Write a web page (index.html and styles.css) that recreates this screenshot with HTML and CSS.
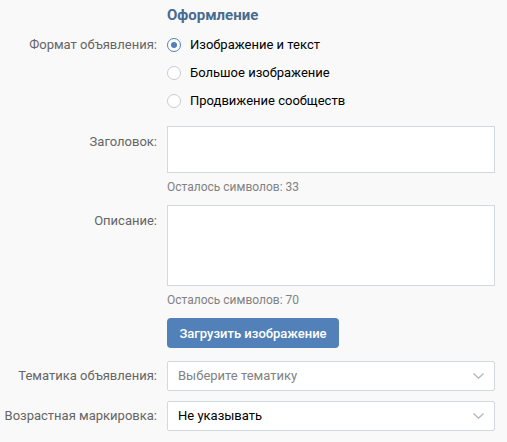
FILE: index.html
```html
<!DOCTYPE html>
<html lang="ru">
<head>
<meta charset="utf-8">
<link rel="stylesheet" href="styles.css">
</head>
<body>
<div class="form">
  <div class="row heading-row">
    <div class="label"></div>
    <div class="heading">Оформление</div>
  </div>

  <div class="row radios-row">
    <div class="label label-radio">Формат объявления:</div>
    <div class="radios">
      <div class="radio checked"><span class="dot"></span><span class="rtext">Изображение и текст</span></div>
      <div class="radio"><span class="dot"></span><span class="rtext">Большое изображение</span></div>
      <div class="radio"><span class="dot"></span><span class="rtext">Продвижение сообществ</span></div>
    </div>
  </div>

  <div class="row title-row">
    <div class="label label-top">Заголовок:</div>
    <div class="control">
      <div class="input input-title"></div>
      <div class="hint">Осталось символов: 33</div>
    </div>
  </div>

  <div class="row desc-row">
    <div class="label label-top">Описание:</div>
    <div class="control">
      <div class="input input-desc"></div>
      <div class="hint">Осталось символов: 70</div>
    </div>
  </div>

  <div class="row button-row">
    <div class="label"></div>
    <div class="control">
      <button class="btn">Загрузить изображение</button>
    </div>
  </div>

  <div class="row select-row select-first">
    <div class="label label-center">Тематика объявления:</div>
    <div class="select placeholder">
      <span>Выберите тематику</span>
      <svg class="chev" width="11" height="6" viewBox="0 0 11 6"><path d="M0.5 0.5 L5.5 5.2 L10.5 0.5" fill="none" stroke="#aab2bd" stroke-width="1.2"/></svg>
    </div>
  </div>

  <div class="row select-row">
    <div class="label label-center">Возрастная маркировка:</div>
    <div class="select">
      <span>Не указывать</span>
      <svg class="chev" width="11" height="6" viewBox="0 0 11 6"><path d="M0.5 0.5 L5.5 5.2 L10.5 0.5" fill="none" stroke="#aab2bd" stroke-width="1.2"/></svg>
    </div>
  </div>
</div>
</body>
</html>
```

FILE: styles.css
```css
html, body {
  margin: 0;
  padding: 0;
  background: #f9f9f9;
}
body {
  font-family: Roboto, "Liberation Sans", Arial, sans-serif;
  font-size: 13px;
  color: #000;
}
.form {
  width: 495px;
}
.row {
  display: grid;
  grid-template-columns: 157px 328px;
  column-gap: 10px;
}
.label {
  text-align: right;
  color: #656565;
  line-height: 16px;
  white-space: nowrap;
}
.label-radio {
  padding-top: 6px;
}
.label-top {
  padding-top: 8px;
}
.label-center {
  align-self: center;
}
.heading-row {
  padding-top: 6px;
}
.heading {
  font-size: 15px;
  font-weight: 700;
  line-height: 18px;
  color: #4a6a8f;
}
.radios-row {
  margin-top: 7px;
}
.radio {
  display: flex;
  align-items: center;
  height: 28px;
}
.dot {
  box-sizing: border-box;
  width: 14px;
  height: 14px;
  border: 1px solid #c5ccd4;
  border-radius: 50%;
  background: #fff;
  margin-right: 9px;
  position: relative;
}
.radio.checked .dot {
  border-color: #5181b8;
}
.radio.checked .dot::after {
  content: "";
  position: absolute;
  left: 3px;
  top: 3px;
  width: 6px;
  height: 6px;
  border-radius: 50%;
  background: #5181b8;
}
.rtext {
  color: #000;
  line-height: 16px;
}
.title-row {
  margin-top: 11px;
}
.input {
  box-sizing: border-box;
  background: #fff;
  border: 1px solid #d3d9de;
}
.input-title {
  height: 47px;
}
.input-desc {
  height: 81px;
}
.hint {
  margin-top: 6px;
  font-size: 12px;
  line-height: 16px;
  color: #828282;
}
.desc-row {
  margin-top: 10px;
}
.button-row {
  margin-top: 10px;
}
.btn {
  height: 30px;
  width: 172px;
  border: 0;
  border-radius: 4px;
  background: #5181b8;
  color: #fff;
  font-family: Roboto, "Liberation Sans", Arial, sans-serif;
  font-size: 13px;
  font-weight: 500;
  padding: 0;
}
.select-row {
  margin-top: 10px;
}
.select-first {
  margin-top: 13px;
}
.select {
  box-sizing: border-box;
  height: 30px;
  background: #fff;
  border: 1px solid #d3d9de;
  border-radius: 2px;
  display: flex;
  align-items: center;
  justify-content: space-between;
  padding: 0 10px 0 10px;
  line-height: 16px;
}
.select.placeholder span {
  color: #828282;
}
.chev {
  display: block;
}
```
